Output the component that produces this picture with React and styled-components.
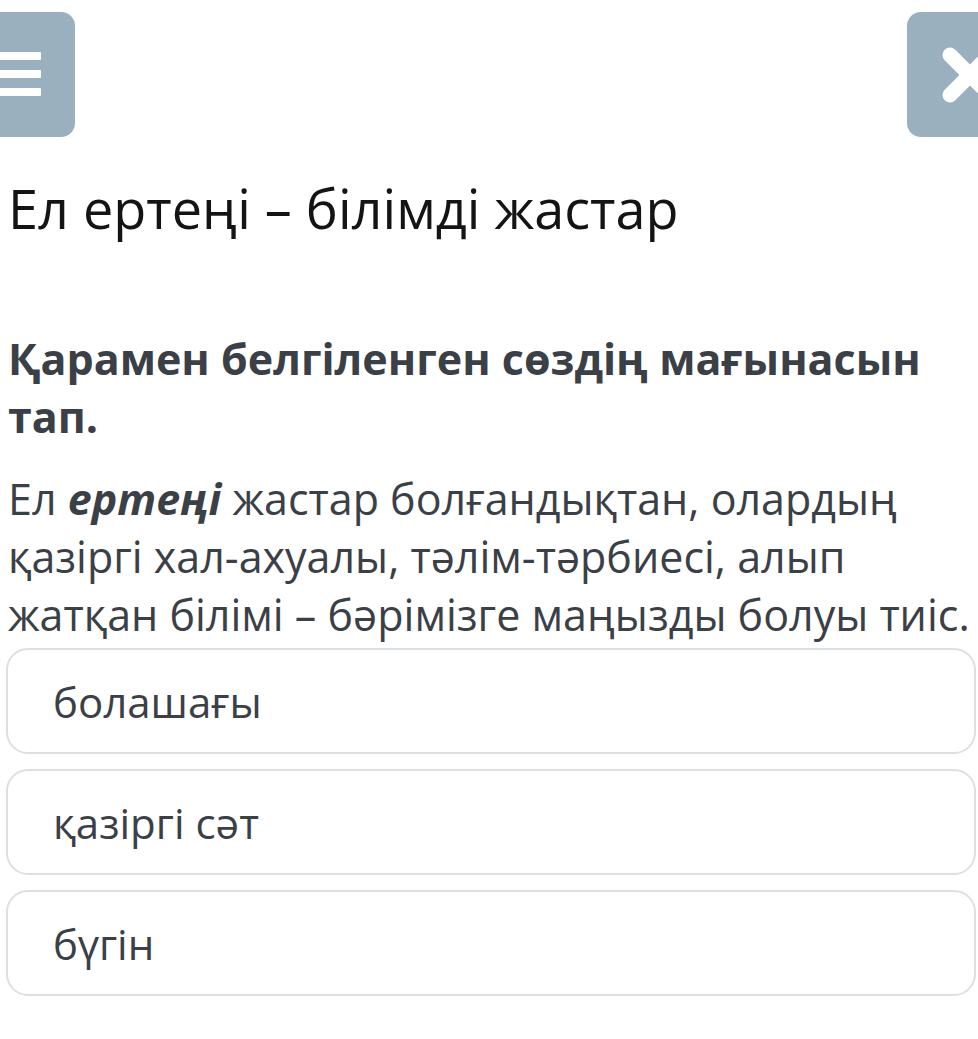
import React from "react";
import styled, { createGlobalStyle } from "styled-components";

const Global = createGlobalStyle`
  html, body { margin: 0; padding: 0; background: #fff; overflow: hidden; }
  body { font-family: "Open Sans", "Noto Sans", sans-serif; }
`;

const Page = styled.div`
  width: 978px;
  display: flex;
  flex-direction: column;
  padding-top: 12px;
`;

const TopBar = styled.header`
  display: flex;
  justify-content: space-between;
  align-items: center;
  margin: 0 -54px 0 -50px;
`;

const IconButton = styled.button`
  width: 125px;
  height: 125px;
  border: none;
  border-radius: 14px;
  background: #9bb0bf;
  display: flex;
  align-items: center;
  justify-content: center;
  padding: 0;
  cursor: pointer;
`;

const Title = styled.h1`
  margin: 36px 0 0 8px;
  font-size: 54px;
  line-height: 70px;
  font-weight: 400;
  color: #141414;
`;

const Question = styled.h2`
  margin: 87px 0 0 8px;
  font-size: 43px;
  line-height: 58px;
  font-weight: 700;
  color: #3b4047;
`;

const Passage = styled.p`
  margin: 24px 0 0 8px;
  font-size: 43px;
  line-height: 58px;
  font-weight: 400;
  color: #3b4047;
`;

const Emph = styled.b`
  font-weight: 700;
  font-style: italic;
`;

const Options = styled.div`
  display: flex;
  flex-direction: column;
  gap: 15px;
  margin: 4px 2px 0 6px;
`;

const Option = styled.div`
  height: 106px;
  box-sizing: border-box;
  border: 2px solid #dde0e2;
  border-radius: 22px;
  display: flex;
  align-items: center;
  padding-left: 45px;
  font-size: 42px;
  color: #3b4047;
`;

const options = ["болашағы", "қазіргі сәт", "бүгін"];

export default function App() {
  return (
    <>
      <Global />
      <Page>
        <TopBar>
          <IconButton aria-label="menu">
            <svg width="60" height="50" viewBox="0 0 60 50">
              <rect x="0" y="2" width="58" height="8" rx="1" fill="#fff" />
              <rect x="0" y="20" width="58" height="8" rx="1" fill="#fff" />
              <rect x="0" y="38" width="58" height="8" rx="1" fill="#fff" />
            </svg>
          </IconButton>
          <IconButton aria-label="close">
            <svg width="60" height="60" viewBox="0 0 60 60">
              <path d="M10 10 L50 50 M50 10 L10 50" stroke="#fff" strokeWidth="15" strokeLinecap="round" />
            </svg>
          </IconButton>
        </TopBar>
        <Title>Ел ертеңі – білімді жастар</Title>
        <Question>Қарамен белгіленген сөздің мағынасын тап.</Question>
        <Passage>
          Ел <Emph>ертеңі</Emph> жастар болғандықтан, олардың қазіргі хал-ахуалы, тәлім-тәрбиесі, алып жатқан білімі – бәрімізге маңызды болуы тиіс.
        </Passage>
        <Options>
          {options.map((o) => (
            <Option key={o}>{o}</Option>
          ))}
        </Options>
      </Page>
    </>
  );
}
